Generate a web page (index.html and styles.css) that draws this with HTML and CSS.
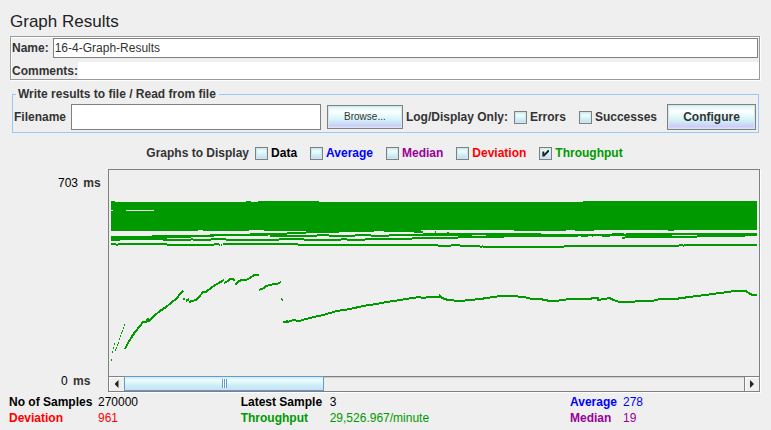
FILE: index.html
```html
<!DOCTYPE html>
<html lang="en">
<head>
<meta charset="utf-8">
<title>Graph Results</title>
<link rel="stylesheet" href="styles.css">
</head>
<body>
<main class="panel">
  <h1 class="title">Graph Results</h1>

  <section class="identity">
    <div class="identity-row name-row">
      <label for="name">Name:</label>
      <input class="field name-field" id="name" type="text" value="16-4-Graph-Results">
    </div>
    <div class="identity-row">
      <label for="comments">Comments:</label>
      <input class="field comments-field" id="comments" type="text">
    </div>
  </section>

  <fieldset class="file-group">
    <legend>Write results to file / Read from file</legend>
    <div class="file-row">
      <label for="filename">Filename</label>
      <input class="field file-field" id="filename" type="text">
      <button class="button browse" type="button">Browse...</button>
      <span class="log-label">Log/Display Only:</span>
      <label class="check"><input type="checkbox">Errors</label>
      <label class="check"><input type="checkbox">Successes</label>
      <button class="button configure" type="button">Configure</button>
    </div>
  </fieldset>

  <div class="series">
    <span class="series-label">Graphs to Display</span>
    <label class="check black"><input type="checkbox">Data</label>
    <label class="check blue"><input type="checkbox">Average</label>
    <label class="check purple"><input type="checkbox">Median</label>
    <label class="check red"><input type="checkbox">Deviation</label>
    <label class="check green"><input type="checkbox" checked>Throughput</label>
  </div>

  <section class="graph">
    <div class="axis">
      <div><span class="axis-value">703</span> ms</div>
      <div><span class="axis-value">0</span> ms</div>
    </div>
    <div class="viewport">
      <svg class="plot" viewBox="109 170 650 206" preserveAspectRatio="none" role="img" aria-label="Throughput graph">
        <!-- Dense throughput band -->
        <path class="area" d="M111 201H115V202H246V201H251V202H258V201H319V202H583V201H757V230H674V231H668V230H594V231H575V230H566V231H514V230H421V231H423V233H414V232H384V231H374V232H339V233H306V231H264V230H249V231H203V230H198V231H111Z"/>
        <path class="gap" d="M111 210h2v1h-2zM126 210h28v1h-28z"/>
        <!-- Secondary levels below the band -->
        <path class="area" d="M111 236H152V235H210V234H250V233H287V232H306V234H287V235H268V236H214V237H191V238H167V240H120V241H111Z"/>
        <path class="level" d="M163 240H191M191 239H193M193 240H211M211 239H226M226 240H279M279 239H304M304 240H341M341 239H347M347 240H365M365 239H412M412 238H458M458 237H504M270 236H317M317 235H329M329 236H355M355 235H371M371 236H389M389 235H472M423 234H541M435 232H436M447 233H449M529 235H612M612 234H624M626 234H757"/>
        <path class="area" d="M458 234H472V236H458ZM472 236H486V237H472ZM486 234H578V237H486ZM581 236H588V237H581ZM592 236H593V237H592ZM602 236H610V237H602ZM540 234H672V236H540ZM672 234H757V235H672ZM697 235H757V236H745V237H697ZM625 236H697V238H625ZM622 237H625V239H622Z"/>
        <path class="level" d="M111 244H116M116 245H118M118 244H167M167 245H214M214 244H219M219 245H220M221 245H222M223 244H298M298 245H438M438 246H451M451 245H460M460 246H480M480 247H482M482 246H483M483 247H564M564 246H679M679 245H683M683 246H684M684 245H757"/>
        <!-- Start-up samples -->
        <path class="speck" d="M111 359h1v2h-1zM112 351h1v2h-1zM113 347h1v2h-1zM114 343h1v2h-1zM115 349h1v2h-1zM116 347h1v2h-1zM117 344h1v2h-1zM118 342h1v2h-1zM119 338h1v2h-1zM120 335h1v2h-1zM121 332h1v2h-1zM122 330h1v2h-1zM123 327h1v2h-1zM124 324h1v2h-1z"/>
        <!-- Running throughput -->
        <path class="level" d="M125 349L128 343L131 338L135 332L140 326L143 322H146L148 319L149 321L155 315L160 311L166 307L171 303L177 298L180 294L183 291M183 299H185M186 301L189 299M189 302L192 301L196 300L199 297L203 292H206L212 287L217 284L224 280M224 283L228 281L230 279H233L235 281M235 285L238 282L241 280H246L250 278L254 275H259M259 290L264 288L266 286L270 285L274 284H277L281 282M281 299H282M282 300H283M283 322H286L287 321L288 322L293 320L299 321L306 319L314 317L323 315L330 313L337 311L350 309L363 306L376 304L387 302L400 300L412 298L420 297L422 298L430 297H440V296L442 298L448 300L460 301L470 300L480 299L487 298L500 296H512L524 297L532 299H540L550 301H558L560 300L573 299H590L593 298H598V300L610 298L613 300L620 302H630L640 301H652L660 299H675L689 297L705 295L720 293L735 291H746L750 294L753 295H757"/>
      </svg>
      <div class="scrollbar">
        <button class="arrow arrow-left" type="button" aria-label="Scroll left"></button>
        <div class="track"><div class="thumb"><span class="grip"></span></div></div>
        <button class="arrow arrow-right" type="button" aria-label="Scroll right"></button>
      </div>
    </div>
  </section>

  <table class="stats">
    <colgroup><col class="c-samples"><col class="c-samples-value"><col class="c-latest"><col class="c-latest-value"><col class="c-average"><col></colgroup>
    <tbody>
      <tr>
        <th class="black" scope="row">No of Samples</th><td class="black">270000</td>
        <th class="black" scope="row">Latest Sample</th><td class="black">3</td>
        <th class="blue" scope="row">Average</th><td class="blue">278</td>
      </tr>
      <tr>
        <th class="red" scope="row">Deviation</th><td class="red">961</td>
        <th class="green" scope="row">Throughput</th><td class="green">29,526.967/minute</td>
        <th class="purple" scope="row">Median</th><td class="purple">19</td>
      </tr>
    </tbody>
  </table>
</main>
</body>
</html>
```

FILE: styles.css
```css
* { box-sizing: border-box; }

body {
  margin: 0;
  background: #efefef;
  color: #333;
  font: bold 12px/16px "Liberation Sans", Arial, sans-serif;
}

.panel { padding: 13px 11px 0 9px; }

.title {
  margin: 0 0 5px 1px;
  color: #222;
  font-size: 17px;
  font-weight: normal;
  line-height: 18px;
}

.black { color: #000; }
.blue { color: #00f; }
.purple { color: #909; }
.red { color: #f00; }
.green { color: #090; }

.field {
  min-width: 0;
  margin: 0;
  border: 1px solid #808080;
  border-radius: 0;
  background: #fff;
  color: #333;
  font: 12px/16px "Liberation Sans", Arial, sans-serif;
}

.identity {
  margin-left: 1px;
  border: 1px solid #999;
  box-shadow: 1px 1px #fff, inset 1px 1px #fff;
  padding: 1px 0 0 1px;
}

.identity-row { display: flex; align-items: center; }
.name-row { gap: 4px; margin-bottom: 4px; padding-right: 1px; }
.name-field { flex: 1; height: 20px; padding: 0 1px; }
.comments-field { flex: 1; height: 17px; border: 0; }

.file-group {
  margin: 6px 1px 0 3px;
  border: 1px solid #99c8f8;
  padding: 2px 2px 2px 1px;
}

.file-group legend {
  margin-left: 2px;
  padding: 0 3px 0 2px;
  line-height: 16px;
}

.file-row { display: flex; align-items: center; }
.file-field { flex: 1; height: 26px; margin: 0 6px 0 5px; }

.button {
  border: 1px solid #808080;
  border-radius: 0;
  padding: 0;
  background: linear-gradient(#d5f3f6, #fff 26%, #d2f4f8 62%, #ccccf8 90%, #e4e4f8);
  box-shadow: inset 0 0 0 1px #d3e8ee;
  color: #333;
  font: bold 12px/16px "Liberation Sans", Arial, sans-serif;
}

.browse { width: 76px; height: 24px; font-size: 10px; font-weight: normal; }
.configure { width: 89px; height: 26px; margin-left: 10px; }
.log-label { margin: 0 6px 0 3px; }

.check { display: flex; align-items: center; gap: 3px; }
.file-row .check + .check { margin-left: 13px; }

.check input {
  appearance: none;
  display: grid;
  place-items: center;
  width: 13px;
  height: 13px;
  margin: 0;
  border: 1px solid #808080;
  background: linear-gradient(#c5eff3, #f0fcfd 30%, #c8f2f7 65%, #d0d0fa);
  box-shadow: inset 0 0 0 1px #cce8ee;
}

.check input:checked::before {
  content: "";
  width: 7px;
  height: 7px;
  background: #222;
  clip-path: polygon(0 28%, 28% 28%, 28% 62%, 86% 0, 100% 0, 100% 28%, 28% 100%, 0 100%);
}

.series {
  display: flex;
  justify-content: center;
  gap: 13px;
  margin: 12px 0 8px;
}

.series-label { margin-right: -7px; }

.graph { display: flex; }

.axis {
  display: flex;
  flex-direction: column;
  justify-content: space-between;
  width: 99px;
  padding: 6px 6px 3px 49px;
  white-space: pre;
}

.axis div:last-child { padding-left: 3px; }
.axis-value { margin-right: 2px; color: #000; font-weight: normal; }

.viewport {
  flex: 1;
  min-width: 0;
  border: 1px solid #808080;
  box-shadow: 1px 1px #fff;
}

.plot {
  display: block;
  width: 100%;
  height: 206px;
  shape-rendering: crispEdges;
}

.area, .speck { fill: #090; }
.gap { fill: #efefef; }
.level { fill: none; stroke: #090; stroke-width: 2; }

.scrollbar {
  display: flex;
  height: 15px;
  border-top: 1px solid #808080;
}

.arrow {
  display: grid;
  place-items: center;
  width: 15px;
  border: 0;
  padding: 0;
  background: #efefef;
  box-shadow: inset 1px 1px #fff;
}

.arrow::before {
  content: "";
  width: 4px;
  height: 8px;
  background: #222;
}

.arrow-left::before { clip-path: polygon(100% 0, 100% 100%, 0 50%); }
.arrow-right { border-left: 1px solid #808080; }
.arrow-right::before { clip-path: polygon(0 0, 100% 50%, 0 100%); }

.track { flex: 1; box-shadow: inset 0 1px #ccc; }

.thumb {
  display: grid;
  place-items: center;
  width: 200px;
  height: 15px;
  margin-top: -1px;
  border: 1px solid #6699cc;
  background: linear-gradient(#c8eef4, #f2fcfd 25%, #c9f0f5 65%, #cfdcf8);
}

.grip {
  width: 5px;
  height: 9px;
  background: repeating-linear-gradient(90deg, #6699cc 0 1px, #fff 1px 2px);
}

.stats {
  width: 100%;
  margin-top: 2px;
  table-layout: fixed;
  border-collapse: collapse;
}

.stats th, .stats td {
  padding: 0;
  text-align: left;
  white-space: nowrap;
}

.stats td { font-weight: normal; }
.c-samples { width: 89px; }
.c-samples-value { width: 19%; }
.c-latest { width: 89px; }
.c-latest-value { width: 32%; }
.c-average { width: 53px; }
```
